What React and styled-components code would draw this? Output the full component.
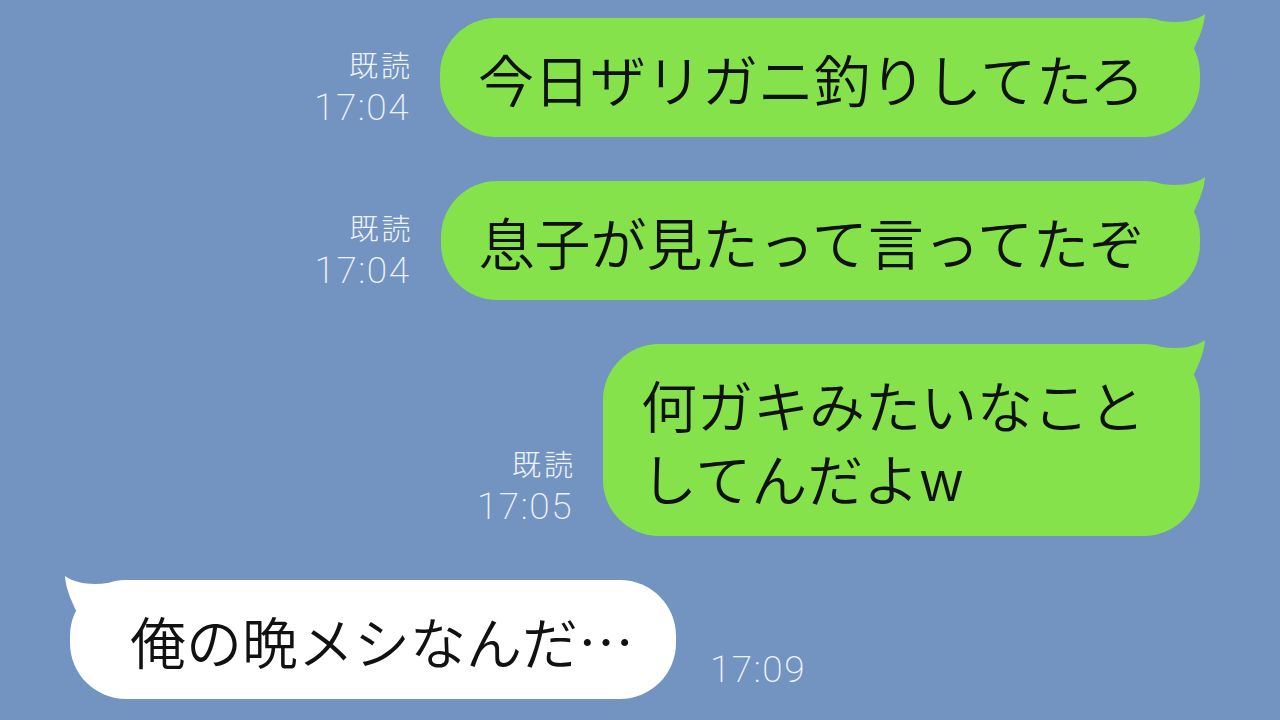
import styled, { createGlobalStyle } from "styled-components";
import React from "react";

const GlobalStyle = createGlobalStyle`
  html, body {
    margin: 0;
    padding: 0;
    background: #7393c1;
  }
  #root {
    width: 1280px;
    height: 720px;
    overflow: hidden;
  }
`;

const messages = [
  { id: 1, mine: true, read: true, time: "17:04", lines: ["今日ザリガニ釣りしてたろ"] },
  { id: 2, mine: true, read: true, time: "17:04", lines: ["息子が見たって言ってたぞ"] },
  { id: 3, mine: true, read: true, time: "17:05", lines: ["何ガキみたいなこと", "してんだよw"] },
  { id: 4, mine: false, read: false, time: "17:09", lines: ["俺の晩メシなんだ…"] },
];

function Tail({ mine, color }) {
  return (
    <TailSvg mine={mine} width="44" height="44" viewBox="0 0 44 44">
      <path d="M0 7 C16 9 32 8 43 0 C42 14 36 27 27 44 L0 44 Z" fill={color} />
    </TailSvg>
  );
}

function Message({ mine, read, time, lines }) {
  const color = mine ? "#85e24b" : "#ffffff";
  return (
    <Row mine={mine}>
      {mine && (
        <Meta>
          {read && <Read>既読</Read>}
          <Time>{time}</Time>
        </Meta>
      )}
      <Bubble mine={mine} color={color}>
        <Tail mine={mine} color={color} />
        {lines.map((l) => (
          <Line key={l}>{l}</Line>
        ))}
      </Bubble>
      {!mine && (
        <Meta>
          <Time>{time}</Time>
        </Meta>
      )}
    </Row>
  );
}

function App() {
  return (
    <>
      <GlobalStyle />
      <Chat>
        {messages.map((m) => (
          <Message key={m.id} {...m} />
        ))}
      </Chat>
    </>
  );
}

const Chat = styled.div`
  width: 1280px;
  height: 720px;
  box-sizing: border-box;
  padding: 18px 80px 0 70px;
  display: flex;
  flex-direction: column;
  gap: 44px;
  background: #7393c1;
  font-family: "Noto Sans CJK JP", "Noto Sans", sans-serif;
`;

const Row = styled.div`
  display: flex;
  align-items: flex-end;
  justify-content: ${(p) => (p.mine ? "flex-end" : "flex-start")};
  gap: ${(p) => (p.mine ? "30px" : "34px")};
`;

const Meta = styled.div`
  display: flex;
  flex-direction: column;
  align-items: flex-end;
  padding-bottom: 11px;
  color: #eef3fa;
  line-height: 1;
`;

const Read = styled.span`
  font-size: 29px;
  font-weight: 300;
  letter-spacing: 3px;
  margin-right: -3px;
  margin-bottom: 10px;
`;

const Time = styled.span`
  font-family: "Roboto", "Noto Sans", sans-serif;
  font-size: 37px;
  font-weight: 200;
  letter-spacing: 1.5px;
`;

const Bubble = styled.div`
  position: relative;
  background: ${(p) => p.color};
  border-radius: 56px;
  padding: ${(p) => (p.mine ? "23px 55px 23px 38px" : "23px 42px 23px 60px")};
  color: #111;
`;

const TailSvg = styled.svg`
  position: absolute;
  top: -4px;
  ${(p) => (p.mine ? "right: -6px;" : "left: -6px; transform: scaleX(-1);")}
`;

const Line = styled.div`
  position: relative;
  font-size: 56px;
  font-weight: 350;
  line-height: 73px;
  white-space: nowrap;
`;

export default App;
